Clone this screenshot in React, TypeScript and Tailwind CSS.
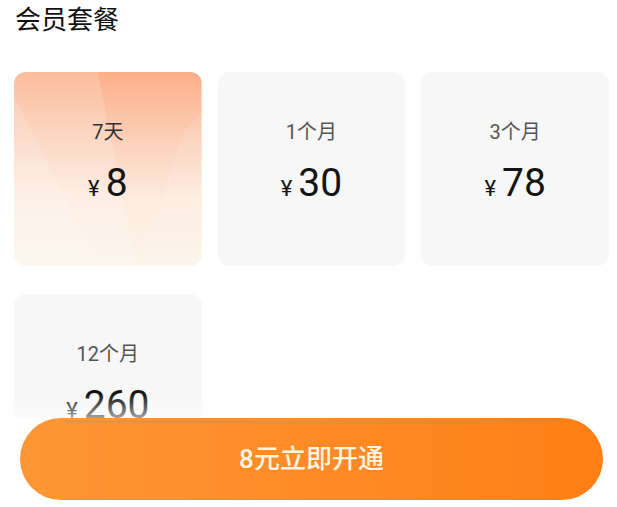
import React from "react";

type Plan = { label: string; price: string; active?: boolean };

const plans: Plan[] = [
  { label: "7天", price: "8", active: true },
  { label: "1个月", price: "30" },
  { label: "3个月", price: "78" },
  { label: "12个月", price: "260" },
];

const font = { fontFamily: 'Roboto, "Noto Sans CJK SC", sans-serif' };

function ActiveBg() {
  return (
    <svg
      className="absolute inset-0 h-full w-full"
      viewBox="0 0 188 194"
      preserveAspectRatio="none"
    >
      <defs>
        <linearGradient id="warm" x1="0" y1="0" x2="0" y2="1">
          <stop offset="0" stopColor="#fbae88" />
          <stop offset="0.35" stopColor="#fcd0b8" />
          <stop offset="0.65" stopColor="#fdebdf" />
          <stop offset="1" stopColor="#fcf4ea" />
        </linearGradient>
      </defs>
      <rect width="188" height="194" fill="url(#warm)" />
      <polygon points="0,0 84,0 122,194 0,194" fill="#ffffff" opacity="0.18" />
      <polygon points="0,24 0,194 86,194" fill="#ffffff" opacity="0.14" />
      <polygon points="124,194 170,60 188,40 188,194" fill="#ffffff" opacity="0.1" />
    </svg>
  );
}

function PlanCard({ plan }: { plan: Plan }) {
  return (
    <div
      className={`relative flex h-[194px] flex-col items-center overflow-hidden rounded-[12px] pt-[48px] ${
        plan.active ? "" : "bg-[#f7f7f7]"
      }`}
    >
      {plan.active && <ActiveBg />}
      <div
        className={`relative text-[20px] leading-[24px] ${
          plan.active ? "text-[#333333]" : "text-[#555555]"
        }`}
      >
        {plan.label}
      </div>
      <div className="relative mt-[15px] flex items-baseline leading-[48px] text-[#141414]">
        <span className="mr-[6px] text-[22px]">¥</span>
        <span className="text-[39px]">{plan.price}</span>
      </div>
    </div>
  );
}

export default function App() {
  return (
    <div className="relative h-[507px] w-[617px] overflow-hidden bg-white" style={font}>
      <div className="pl-[14px] pr-[8px]">
        <h1 className="pl-[1px] pt-[7px] text-[26px] font-normal leading-[26px] text-[#111111]">
          会员套餐
        </h1>
        <div className="mt-[39px] grid grid-cols-3 gap-x-[16px] gap-y-[28px]">
          {plans.map((p) => (
            <PlanCard key={p.label} plan={p} />
          ))}
        </div>
      </div>

      <div className="absolute bottom-0 left-0 right-0">
        <div className="h-[24px] bg-gradient-to-b from-white/0 to-white/60" />
        <div className="bg-white pb-[7px] pl-[20px] pr-[14px]">
          <button
            type="button"
            className="flex h-[82px] w-full items-center justify-center rounded-full bg-gradient-to-r from-[#fd9634] to-[#ff7f12] text-[26px] font-medium text-[#fff4e2]"
          >
            8元立即开通
          </button>
        </div>
      </div>
    </div>
  );
}
